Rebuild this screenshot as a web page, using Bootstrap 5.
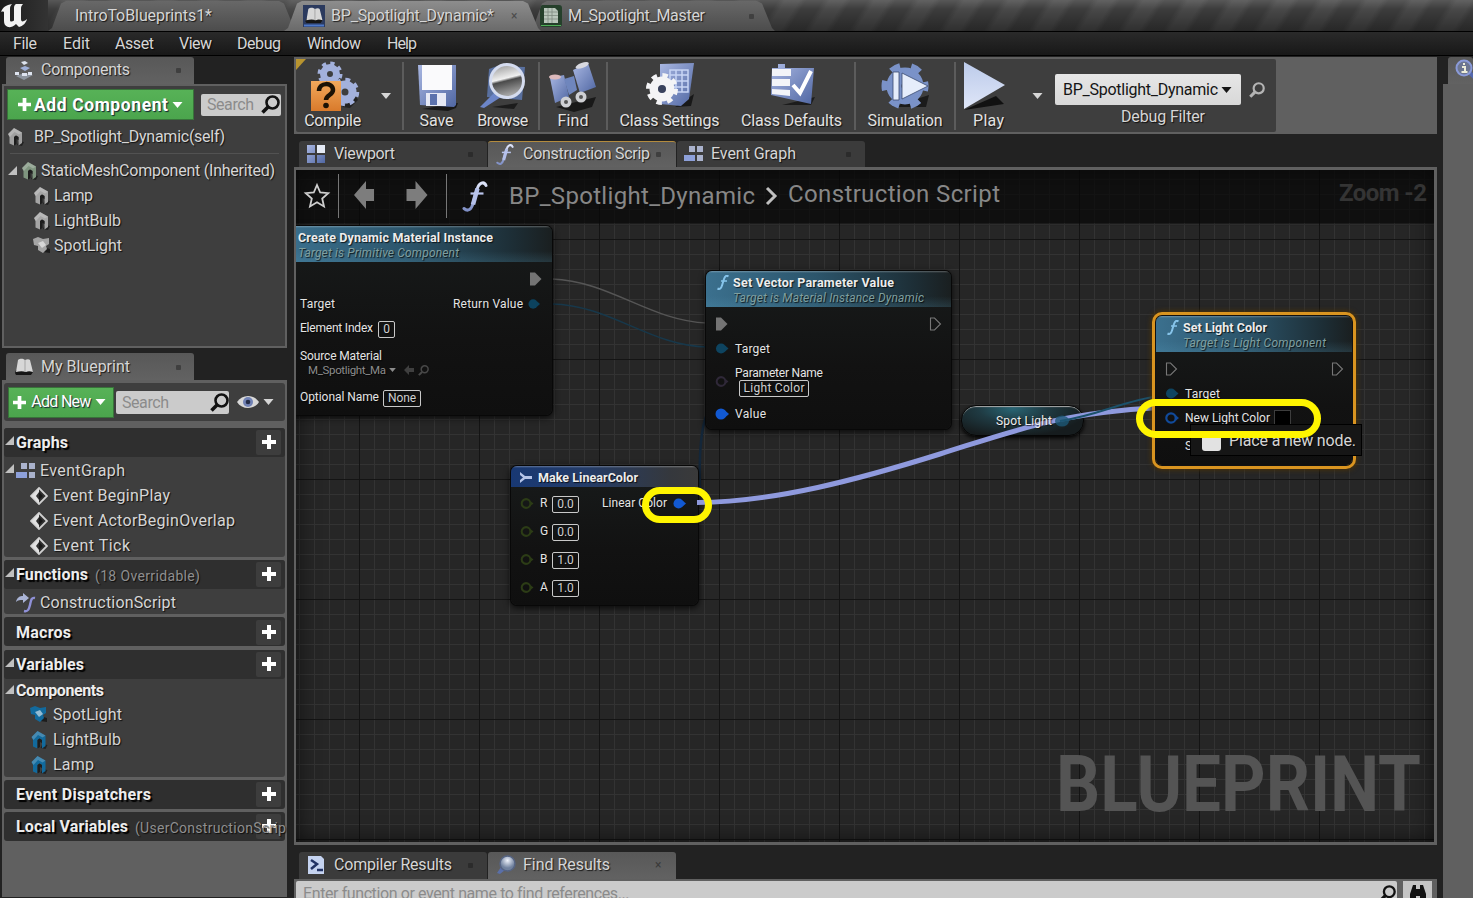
<!DOCTYPE html>
<html lang="en">
<head>
<meta charset="utf-8">
<title>Blueprint Editor</title>
<link href="https://cdn.jsdelivr.net/npm/bootstrap@5.3.0/dist/css/bootstrap.min.css" rel="stylesheet">
<style>
body{width:1473px;height:898px;overflow:hidden;background:#222;color:#d6d6d6;font:16px/20px Roboto,sans-serif;text-shadow:1px 1px 1px rgba(0,0,0,.75)}
span[data-w]{white-space:nowrap;flex:none;display:inline-block}
svg{flex:none;display:block;overflow:visible}
b,.fw-bold{color:#ededed}
/* title bar */
.titlebar{height:31px;background:linear-gradient(rgba(255,255,255,.14),transparent 30%,rgba(0,0,0,.35)),repeating-linear-gradient(122deg,#3c3c3c 0 14px,#484848 20px 32px,#3c3c3c 38px);box-shadow:0 1px #000;z-index:1}
.titlebar .logo-area{width:48px;background:linear-gradient(90deg,#1c1c1c,#333)}
.doc{height:30px;margin-top:1px;background:linear-gradient(#686868,#4c4c4c);clip-path:polygon(0 100%,4px 90%,13px 8%,18px 0,calc(100% - 18px) 0,calc(100% - 13px) 8%,calc(100% - 3px) 90%,100% 100%)}
.doc.on{background:linear-gradient(#8d8d8d,#6a6a6a);z-index:1}
.menubar{height:24px;margin-top:1px;background:linear-gradient(#2a2a2a,#181818);border-bottom:1px solid #000;padding-left:13px}
.menubar span{margin-right:26px}
/* docked panels */
.dtab{height:27px;width:188px;border-radius:3px 3px 0 0;background:#3b3b3b;margin-right:1px;padding-bottom:1px}
.dtab.on{background:linear-gradient(#585858,#626262)}
.dot{width:5px;height:5px;background:#2b2b2b;border-radius:1px}
.dtab.on .dot{background:#3f3f3f}
.frame{border:2px solid #606060;background:#3e3e3e}
.left{width:287px;padding-left:2px}
.green{background:linear-gradient(#57b257,#4ba54d);color:#fff;box-shadow:0 0 0 1px #38733a;text-shadow:1px 1px 1px #123}
.field{background:#cbcbcb;color:#8b8b8b;text-shadow:none;border-radius:2px}
.sec{background:#3e3e3e;border-radius:3px;margin:0 2px 3px 2px}
.head{height:29px;background:#2f2f2f;border-radius:3px}
.head b{text-shadow:2px 2px 1px #000;font-weight:700}
.plusbtn{width:25px;height:25px;background:#3d3d3d;border-radius:2px;margin-right:4px}
.plusbtn svg{margin-bottom:1px}
.rw{height:25px}
.lower .rw{padding-top:2px}
.small14{font-size:14px;color:#8f8f8f}
/* toolbar */
.tools{height:77px;width:1143px;background:#606060;padding:2px}
.tools .grp{background:#3e3e3e;width:980px;border-radius:2px}
.part{border-right:2px solid #5c5c5c;height:68px;margin-top:3px}
.tool{text-align:center;color:#e2e2e2}
.tool svg{height:50px;width:50px;margin:-1px auto 0}
.tool span{line-height:19px}
.combo{width:186px;height:31px;background:linear-gradient(#e6e6e6,#d8d8d8);color:#151515;text-shadow:none;border-radius:2px;padding-left:8px}
/* graph */
.graph{height:678px;width:1143px;border:3px solid #606060;border-left-width:2px;background-color:#262626;
background-image:linear-gradient(#141414 1px,transparent 1px),linear-gradient(90deg,#141414 1px,transparent 1px),linear-gradient(#333 1px,transparent 1px),linear-gradient(90deg,#333 1px,transparent 1px);
background-size:120px 120px,120px 120px,15px 15px,15px 15px;background-position:0 69px,63px 0,0 9px,3px 0}
.crumbs{height:53px;background:rgba(7,7,7,.72);color:#878787;font-size:24px;text-shadow:none;box-shadow:0 1px 2px #0006}
.crumbs i{width:1px;height:44px;background:#777}
.vignette{inset:0;box-shadow:inset 0 0 22px #000a}
.node{position:absolute;background:linear-gradient(#181b1b,#121212 60%,#0f0f0f);border-radius:6px;box-shadow:0 0 0 1px #080808,0 2px 6px 1px #000b;font-size:12px;line-height:14px;color:#e4e4e4;overflow:hidden}
.nh{height:36px;padding-top:4px;margin-bottom:4px;background:linear-gradient(rgba(255,255,255,.28) 0,transparent 2px,transparent 70%,rgba(90,160,190,.18)),linear-gradient(90deg,#3b708e,#2c556b 45%,#1d2e36 85%,#1a1f20)}
.nh b{font-size:12.5px;line-height:15px;height:15px;display:block;font-weight:700}
.nh em{line-height:16px;height:15px;display:block;color:#7f9f9f}
.pr{height:25px;padding-left:9px}
.pr>svg:first-child{margin-right:6px}
.bx{border:1.5px solid #c9c9c9;border-radius:2px;height:17px;line-height:15px;text-align:center;color:#cfcfcf}
.pill{position:absolute;border-radius:15px;border:1px solid #060606;box-shadow:inset 0 2px 1px -1px #aaa,0 2px 4px #000;background:radial-gradient(ellipse at 42% 10%,#286473 0,#1f3a42 35%,#161c1e 75%);font-size:12px}
.ring{position:absolute;border:7px solid #fff500;border-radius:20px;z-index:5}
.tip{position:absolute;background:#161616;border:1px solid #000;z-index:4}
.layer{position:absolute;left:0;top:0;z-index:1}
</style>
</head>
<body>
<svg width="0" height="0" class="position-absolute">
<defs>
<linearGradient id="lv" x2="0" y2="1"><stop stop-color="#dfe5fa"/><stop offset="1" stop-color="#7f8fc6"/></linearGradient>
<linearGradient id="pl" x2="0" y2="1"><stop stop-color="#bccbea"/><stop offset="1" stop-color="#dfe6f8"/></linearGradient>
<linearGradient id="bl" x2="1" y2="1"><stop stop-color="#a9b7e2"/><stop offset="1" stop-color="#5067a3"/></linearGradient>
<linearGradient id="or" x2="0" y2="1"><stop stop-color="#f1a95c"/><stop offset="1" stop-color="#d97a2b"/></linearGradient>
<linearGradient id="gl" x2=".25" y2="1"><stop stop-color="#8e8e8e"/><stop offset=".5" stop-color="#f0f0f0"/><stop offset=".58" stop-color="#4a4a4a"/><stop offset="1" stop-color="#a5a5a5"/></linearGradient>
<radialGradient id="ball" cx=".5" cy=".3"><stop stop-color="#eef2fb"/><stop offset="1" stop-color="#71829f"/></radialGradient>
<symbol id="mesh" viewBox="0 0 16 18"><path d="M11 13l5 1-2 4-5-1z" fill="#161616" opacity=".7"/><path d="M0 6L6 0l8 4.500V15l-3.500 2.500V9L8 7.500 6 9v8.500L1.500 15.500V9z" fill="currentColor"/><path d="M0 6L6 0l8 4.500-3 2L6.500 4 2 9z" fill="#fff" opacity=".22"/><path d="M6 9l2-1.500L10.500 9v3L8.500 11v5L6 17.500z" fill="#1d1d1d"/></symbol>
<symbol id="spot" viewBox="0 0 18 18"><path d="M10 10l7 2v4l-7-1z" fill="#1c1c1c"/><path d="M0 2l5-2 5 2 6-1v6l-3 2 1 3-4 4-5-3v-4L1 8z" fill="currentColor"/><path d="M5 6l5-2 3 4-4 3z" fill="#fff" opacity=".55"/></symbol>
<symbol id="dia" viewBox="0 0 18 18"><path d="M9 1l8 8-8 8-8-8z" fill="#303030" stroke="#d0d0d0" stroke-width="1.800"/><path d="M9 1.500L1.500 9 9 16.500V13L6 9l3-4z" fill="#e2e2e2"/><path d="M9 5v8l4-4z" fill="#181818"/></symbol>
<symbol id="plus" viewBox="0 0 14 14"><path d="M5 0h4v5h5v4H9v5H5V9H0V5h5z" fill="currentColor"/></symbol>
<symbol id="car" viewBox="0 0 10 6"><path d="M0 0h10L5 6z" fill="currentColor"/></symbol>
<symbol id="tri" viewBox="0 0 9 9"><path d="M9 0v9H0z" fill="#c0c0c0"/></symbol>
<symbol id="mag" viewBox="0 0 19 19"><circle cx="11.500" cy="7.500" r="6" fill="none" stroke="currentColor" stroke-width="2.600"/><path d="M7 12l-5.500 5.500" stroke="currentColor" stroke-width="3.600"/></symbol>
<symbol id="eff" viewBox="0 0 26 30"><path d="M24 4C22-.5 17 1 15 8L11 22C9.500 28 6 30.500 2 27" fill="none" stroke="url(#lv)" stroke-width="3" stroke-linecap="round"/><path d="M15.500 7L11 23" stroke="#b4c0ea" stroke-width="4.500"/><path d="M8.500 12h13" stroke="#b9c4ec" stroke-width="2.200"/></symbol>
<symbol id="effs" viewBox="0 0 12 15"><path d="M11.500 1.500C9.500 0 8 1 7 4L5 10.500C4 14 2.500 14.500.5 13.500" fill="none" stroke="#86c4ea" stroke-width="2"/><path d="M4 6h6" stroke="#86c4ea" stroke-width="1.400"/></symbol>
<symbol id="grid4" viewBox="0 0 20 18"><path d="M5 1h6v6H5zM13 1h6v6h-6zM13 10h6v6h-6z" fill="#aab2cc"/><path d="M0 10h11v6H0z" fill="#8da0da"/></symbol>
<symbol id="book" viewBox="0 0 20 18"><path d="M1 15l1 2h15l2-3-1-2H2z" fill="#161616"/><path d="M4 2c3-2 5-1 7 0 2-1 4-1 5 0l3 12c-3-1-5-1-7 0-3-1-6-1-10 0z" fill="#d7d7d7"/><path d="M11 2v12" stroke="#a5a5a5"/></symbol>
<symbol id="exF" viewBox="0 0 14 14"><path d="M1 .5h5L12.500 7 6 13.500H1z" fill="#747474"/></symbol>
<symbol id="exO" viewBox="0 0 14 14"><path d="M1.500 1h4L11.500 7l-6 6h-4z" fill="none" stroke="#777" stroke-width="1.100"/></symbol>
<symbol id="pF" viewBox="0 0 14 14"><circle cx="6" cy="7" r="5.500" fill="currentColor"/><path d="M10 3.500L14 7l-4 3.500z" fill="currentColor"/></symbol>
<symbol id="pO" viewBox="0 0 14 14"><circle cx="6" cy="7" r="4.700" fill="none" stroke="currentColor" stroke-width="2.200"/><path d="M11 4.500L14 7l-3 2.500z" fill="currentColor"/></symbol>
<symbol id="ball2" viewBox="0 0 20 20"><path d="M5 12l-4 6 3 1 5-4z" fill="#5a6fa8"/><circle cx="11.500" cy="8.500" r="7.500" fill="url(#ball)" stroke="#566483" stroke-width="1.500"/></symbol>
</defs></svg>

<header class="titlebar d-flex position-relative">
  <div class="logo-area"><svg width="30" height="28" viewBox="0 0 30 28"><path d="M1 12C3 7 6 5 12 4c-1.500 1.500-2 3-2 5v11c0 2 2 2 4 .5V8c0-2 .5-3 2-4h7c-1.500 1.500-2 3-2 5v10c0 2 1 3 3 2 1-.5 2-1 3-2-1 4-4 7-8 8l-3-3c-3 3-6 3.500-8 3-3-1-4-3-4-6v-9c-2-1-3 0-5 1z" fill="#f3f3f3"/></svg></div>
  <div class="doc d-flex align-items-center" style="width:249px;padding-left:27px"><span data-w="137">IntroToBlueprints1*</span></div>
  <div class="doc on d-flex align-items-center" style="width:257px;margin-left:-13px;padding-left:19px"><svg width="22" height="22" style="margin-right:6px"><path d="M0 0h22v22H0z" fill="#2b3a5e"/><use href="#book" x="1" y="2" width="20" height="17"/><path d="M1 20.500h20" stroke="#4d78c9" stroke-width="2"/></svg><span data-w="163">BP_Spotlight_Dynamic*</span><span style="margin-left:17px;color:#4b4b4b;font-size:12px;text-shadow:none">×</span></div>
  <div class="doc d-flex align-items-center" style="width:246px;margin-left:-12px;padding-left:11px"><svg width="22" height="22" style="margin-right:6px"><rect width="22" height="22" rx="3" fill="#25402b"/><path d="M4 3h11l3 3v12H4z" fill="#b9c6bb"/><path d="M4 7h14M4 10.500h14M4 14h14M8 3v15M12 3v15" stroke="#7d8c80" stroke-width=".8"/><path d="M1 20.500h20" stroke="#4fae57"/></svg><span data-w="137">M_Spotlight_Master</span><span class="dot" style="margin-left:44px;background:#404040"></span></div>
</header>
<nav class="menubar d-flex align-items-center"><span data-w="24">File</span><span data-w="27" style="margin-right:25px">Edit</span><span data-w="39" style="margin-right:25px">Asset</span><span data-w="33" style="margin-right:25px">View</span><span data-w="44">Debug</span><span data-w="54">Window</span><span data-w="30">Help</span></nav>

<main class="d-flex" style="padding-top:1px;height:841px">
 <aside class="left d-flex flex-column">
  <div class="dtab on d-flex align-items-center" style="margin-left:4px;padding-left:8px"><svg width="20" height="20" viewBox="0 0 20 20" style="margin-right:7px"><path d="M2 16l8-3 9 2-9 5z" fill="#8d949e"/><path d="M6 8l5-2 5 2-5 3z" fill="#9fb0d8"/><path d="M7 2l4-1 3 2-4 2zM1 12h4v3H1zM14 12h4v3h-4zM8 13h5v3H8z" fill="#dde3ee"/></svg><span data-w="89">Components</span><span class="dot" style="margin-left:46px"></span></div>
  <section class="frame" style="height:264px;padding:4px 4px 0">
    <div class="d-flex align-items-center"><button class="green border-0 p-0 d-flex align-items-center fw-bold" style="width:185px;height:29px;font-size:17.500px;padding-left:10px!important"><svg width="13" height="13" style="margin-right:3px"><use href="#plus"/></svg><span data-w="134">Add Component</span><svg width="11" height="6" style="margin-left:4px"><use href="#car"/></svg></button>
    <div class="field d-flex align-items-center" style="width:80px;height:22px;margin-left:8px;padding-left:6px"><span data-w="47">Search</span><svg width="19" height="19" style="margin-left:7px;color:#111"><use href="#mag"/></svg></div></div>
    <div class="d-flex align-items-center" style="height:32px;padding-top:4px"><svg width="16" height="18" style="margin-right:10px;color:#a0a0a0"><use href="#mesh"/></svg><span data-w="191">BP_Spotlight_Dynamic(self)</span></div>
    <div style="height:1px;background:#525252;margin:2px 2px 4px"></div>
    <div class="rw d-flex align-items-center"><svg width="9" height="9"><use href="#tri"/></svg><svg width="16" height="18" style="margin:0 3px 0 5px;color:#7f957f"><use href="#mesh"/></svg><span data-w="234">StaticMeshComponent (Inherited)</span></div>
    <div class="rw d-flex align-items-center" style="padding-left:26px"><svg width="16" height="18" style="margin-right:4px;color:#a5a5a5"><use href="#mesh"/></svg><span data-w="39">Lamp</span></div>
    <div class="rw d-flex align-items-center" style="padding-left:26px"><svg width="16" height="18" style="margin-right:4px;color:#a5a5a5"><use href="#mesh"/></svg><span data-w="67">LightBulb</span></div>
    <div class="rw d-flex align-items-center" style="padding-left:25px"><svg width="18" height="18" style="margin-right:3px;color:#a5a5a5"><use href="#spot"/></svg><span data-w="68">SpotLight</span></div>
  </section>
  <div class="dtab on d-flex align-items-center" style="margin:5px 0 0 4px;padding:1px 0 0 8px"><svg width="20" height="18" style="margin-right:7px"><use href="#book"/></svg><span data-w="89">My Blueprint</span><span class="dot" style="margin-left:46px"></span></div>
  <section class="lower flex-fill" style="background:#606060;padding-top:3px">
    <div class="sec d-flex align-items-center" style="height:38px;margin-bottom:7px;padding-left:5px"><button class="green border-0 p-0 d-flex align-items-center" style="width:104px;height:29px;padding-left:4px!important"><svg width="13" height="13" style="margin-right:5px"><use href="#plus"/></svg><span data-w="60">Add New</span><svg width="11" height="6" style="margin-left:4px"><use href="#car"/></svg></button>
    <div class="field d-flex align-items-center" style="width:113px;height:23px;margin-left:3px;padding:1px 0 0 6px"><span data-w="47">Search</span><svg width="19" height="19" style="margin-left:41px;color:#111"><use href="#mag"/></svg></div>
    <svg width="22" height="14" viewBox="0 0 22 14" style="margin-left:8px"><path d="M0 7c5-8 17-8 22 0-5 8-17 8-22 0z" fill="#d8d8d8"/><circle cx="11" cy="7" r="5" fill="#7182b5"/><circle cx="11" cy="7" r="2.300" fill="#242c48"/></svg><svg width="11" height="6" style="margin-left:4px"><use href="#car"/></svg></div>
    <div class="sec" style="height:129px"><div class="head d-flex align-items-center"><svg width="9" height="9" style="margin:0 2px 4px 1px"><use href="#tri"/></svg><b><span data-w="52">Graphs</span></b><div class="plusbtn ms-auto d-flex align-items-center justify-content-center"><svg width="14" height="14" color="#fff"><use href="#plus"/></svg></div></div>
      <div class="rw d-flex align-items-center"><svg width="9" height="9" style="margin:0 2px 4px 1px"><use href="#tri"/></svg><svg width="20" height="18" style="margin-right:4px"><use href="#grid4"/></svg><span data-w="85">EventGraph</span></div>
      <div class="rw d-flex align-items-center" style="padding-left:26px"><svg width="18" height="18" style="margin-right:5px"><use href="#dia"/></svg><span data-w="117">Event BeginPlay</span></div>
      <div class="rw d-flex align-items-center" style="padding-left:26px"><svg width="18" height="18" style="margin-right:5px"><use href="#dia"/></svg><span data-w="182">Event ActorBeginOverlap</span></div>
      <div class="rw d-flex align-items-center" style="padding-left:26px"><svg width="18" height="18" style="margin-right:5px"><use href="#dia"/></svg><span data-w="77">Event Tick</span></div></div>
    <div class="sec" style="height:54px"><div class="head d-flex align-items-center"><svg width="9" height="9" style="margin:0 2px 4px 1px"><use href="#tri"/></svg><b><span data-w="72">Functions</span></b><span class="small14" data-w="105" style="margin-left:7px;padding-top:3px">(18 Overridable)</span><div class="plusbtn ms-auto d-flex align-items-center justify-content-center"><svg width="14" height="14" color="#fff"><use href="#plus"/></svg></div></div>
      <div class="rw d-flex align-items-center" style="padding-left:12px"><svg width="20" height="20" viewBox="0 0 20 20" style="margin-right:4px"><path d="M0 9c1-5 4-6 7-6V0l6 5-6 5V7C4 7 2 7 0 9z" fill="#aab4d6"/><path d="M19 5c-4-1-4 3-5 7s-2 7-6 6" fill="none" stroke="#8f90d6" stroke-width="2.400"/></svg><span data-w="136">ConstructionScript</span></div></div>
    <div class="sec head d-flex align-items-center" style="background:#2f2f2f;margin-bottom:4px;padding:2px 0 0 12px"><b><span data-w="55">Macros</span></b><div class="plusbtn ms-auto d-flex align-items-center justify-content-center"><svg width="14" height="14" color="#fff"><use href="#plus"/></svg></div></div>
    <div class="sec" style="height:127px"><div class="head d-flex align-items-center"><svg width="9" height="9" style="margin:0 2px 4px 1px"><use href="#tri"/></svg><b><span data-w="68">Variables</span></b><div class="plusbtn ms-auto d-flex align-items-center justify-content-center"><svg width="14" height="14" color="#fff"><use href="#plus"/></svg></div></div>
      <div class="d-flex align-items-center" style="height:22px;padding-top:2px"><svg width="9" height="9" style="margin:0 2px 4px 1px"><use href="#tri"/></svg><b><span data-w="88">Components</span></b></div>
      <div class="rw d-flex align-items-center" style="padding-left:26px"><svg width="18" height="18" style="margin-right:5px;color:#126a9d"><use href="#spot"/></svg><span data-w="69">SpotLight</span></div>
      <div class="rw d-flex align-items-center" style="padding-left:27px"><svg width="17" height="18" style="margin-right:5px;color:#126a9d"><use href="#mesh"/></svg><span data-w="68">LightBulb</span></div>
      <div class="rw d-flex align-items-center" style="padding-left:27px"><svg width="17" height="18" style="margin-right:5px;color:#126a9d"><use href="#mesh"/></svg><span data-w="41">Lamp</span></div></div>
    <div class="sec head d-flex align-items-center" style="background:#2f2f2f;padding-left:12px"><b><span data-w="135">Event Dispatchers</span></b><div class="plusbtn ms-auto d-flex align-items-center justify-content-center"><svg width="14" height="14" color="#fff"><use href="#plus"/></svg></div></div>
    <div class="sec head d-flex align-items-center position-relative" style="background:#2f2f2f;padding-left:12px"><b><span data-w="112">Local Variables</span></b><div class="plusbtn position-absolute end-0 d-flex align-items-center justify-content-center"><svg width="14" height="14" color="#fff"><use href="#plus"/></svg></div><span class="small14 position-relative" data-w="151" style="margin-left:7px;padding-top:3px">(UserConstructionScrip</span></div>
  </section>
 </aside>

 <div style="width:1143px;margin-left:7px">
  <div class="tools"><div class="grp d-flex position-relative h-100">
    <svg width="10" height="11" class="position-absolute"><path d="M0 0h10L0 11z" fill="#b8942f"/></svg>
    <div class="part d-flex" style="width:108px"><div class="tool" style="width:73px"><svg viewBox="0 0 50 50"><path d="M34 46l14-10 2 3-8 8z" fill="#222"/><g fill="none" stroke="#a3b1dc"><circle cx="22" cy="13" r="6.500" stroke-width="7"/><circle cx="22" cy="13" r="10.500" stroke-width="4" stroke-dasharray="4.120 4.120"/><circle cx="37" cy="31" r="7.500" stroke-width="8"/><circle cx="37" cy="31" r="12" stroke-width="4.500" stroke-dasharray="4.710 4.710"/></g><path d="M3 20h30v30H3z" fill="url(#or)"/><path d="M11 30c0-9 14-9 14-1 0 5-7 5-7 10" fill="none" stroke="#1b1205" stroke-width="4.500"/><circle cx="18" cy="44.500" r="2.800" fill="#1b1205"/></svg><span data-w="57">Compile</span></div><svg width="12" height="6" style="margin:31px 0 0 11px"><use href="#car"/></svg></div>
    <div class="part d-flex" style="width:136px"><div class="tool" style="width:65px"><svg viewBox="0 0 50 50"><path d="M10 48l36-6-2 5-8 3z" fill="#181818"/><path d="M6 4h38v40l-2 2-34-2z" fill="url(#bl)"/><path d="M10 4h30v25H10z" fill="#fafafc"/><path d="M14 32h20v13H14z" fill="#e6e9f5"/><path d="M18 33h7v11h-7z" fill="#5c72ad"/></svg><span data-w="34">Save</span></div><div class="tool" style="width:67px"><svg viewBox="0 0 50 50"><path d="M11 8l8-3 28 1-3 33-35-3z" fill="#59709f"/><path d="M14 46l26-4-4 6z" fill="#1c1c1c"/><path d="M17 31L2 46l4 1 17-11z" fill="#6c85c8"/><circle cx="29" cy="20" r="16.500" fill="url(#gl)" stroke="#d5dcef" stroke-width="3"/></svg><span data-w="51">Browse</span></div></div>
    <div class="part" style="width:68px"><div class="tool"><svg viewBox="0 0 50 50"><path d="M8 46l40-10-4 10-18 5z" fill="#191919"/><path d="M2 17l14-3 5 22-14 6z" fill="url(#bl)"/><path d="M25 9l15-7 8 24-16 6z" fill="url(#bl)"/><path d="M16 18l10-3 3 14-8 5z" fill="#6f86bd"/><ellipse cx="7" cy="16" rx="6" ry="2.500" fill="#dcb9bb"/><ellipse cx="34" cy="4.500" rx="7" ry="2.500" transform="rotate(-20 34 4)" fill="#d8d9e0"/><circle cx="18" cy="41" r="5.500" fill="#cfd0d4"/><circle cx="33" cy="36" r="5.500" fill="#cfd0d4"/><circle cx="18" cy="41" r="2" fill="#555"/><circle cx="33" cy="36" r="2" fill="#555"/></svg><span data-w="31">Find</span></div></div>
    <div class="part d-flex" style="width:248px"><div class="tool" style="width:123px"><svg viewBox="0 0 50 50"><path d="M30 46l19-13-3 12z" fill="#181818"/><path d="M15 3l34-1-5 36-8 7-21-2z" fill="url(#bl)"/><path d="M25 9h18v22H25zM31 9v22M37 9v22M25 14h18M25 20h18M25 26h18" fill="none" stroke="#c8d5f5" stroke-width="1.500"/><g fill="none" stroke="#f4f4f6"><circle cx="17" cy="28" r="8" stroke-width="9"/><circle cx="17" cy="28" r="13.500" stroke-width="5" stroke-dasharray="5.300 5.300"/></g><circle cx="17" cy="28" r="4" fill="#39425c"/></svg><span data-w="100">Class Settings</span></div><div class="tool" style="width:121px"><svg viewBox="0 0 50 50"><path d="M15 44l33-8-4 8z" fill="#1c1c1c"/><path d="M11 3h7v4h29l-3 36-40-9 1-27h6z" fill="url(#bl)"/><path d="M5 8h19v7H5zM5 18h18v7H5zM5 28l18 1v6L5 33z" fill="#f3f4f8"/><path d="M26 24l7 8L44 10" fill="none" stroke="#fff" stroke-width="4"/></svg><span data-w="101">Class Defaults</span></div></div>
    <div class="part" style="width:100px"><div class="tool"><svg viewBox="0 0 50 50"><path d="M12 46l37-12-3 12z" fill="#1b1b1b"/><g fill="none" stroke="#7a92c8"><circle cx="25" cy="25" r="11" stroke-width="15"/><circle cx="25" cy="25" r="20.500" stroke-width="6" stroke-dasharray="10 11.470" stroke-dashoffset="5"/></g><path d="M13 11h6v28h-6zM22 12l26 13-26 13z" fill="#e6edfb" stroke="#3a4a70" stroke-width=".8"/></svg><span data-w="75">Simulation</span></div></div>
    <div class="d-flex" style="margin-top:3px"><div class="tool" style="width:65px"><svg viewBox="0 0 50 50" style="margin-left:4px"><path d="M4 49l40-6-8-8z" fill="#111"/><path d="M4 1l41 23L4 48z" fill="url(#pl)"/></svg><span data-w="31">Play</span></div><svg width="11" height="6" style="margin:31px 0 0 11px"><use href="#car"/></svg>
    <div style="margin:12px 0 0 12px"><div class="d-flex align-items-center"><div class="combo d-flex align-items-center"><span data-w="155">BP_Spotlight_Dynamic</span><svg width="11" height="6" style="margin-left:3px"><use href="#car"/></svg></div><svg width="16" height="16" style="margin-left:8px;color:#b4b4b4"><use href="#mag"/></svg></div><div style="padding-left:66px;margin-top:2px"><span data-w="84">Debug Filter</span></div></div></div>
  </div></div>
  <div class="d-flex" style="padding:7px 0 0 5px;height:33px">
    <div class="dtab d-flex align-items-center" style="padding-left:7px"><svg width="20" height="20" viewBox="0 0 20 20" style="margin-right:8px"><path d="M1 1h8v8H1zM11 1h8v8h-8zM1 11h8v8H1zM11 11h8v8h-8z" fill="url(#bl)"/><path d="M11 1h8v8h-8z" fill="#e4eaf5"/></svg><span data-w="61">Viewport</span><span class="dot" style="margin-left:73px"></span></div>
    <div class="dtab on d-flex align-items-center" style="padding:0 0 2px 8px;border-top:1px solid #b38b3e"><svg width="18" height="21" style="margin-right:9px"><use href="#eff"/></svg><span data-w="127">Construction Scrip</span><span class="dot" style="margin-left:6px"></span></div>
    <div class="dtab d-flex align-items-center" style="padding-left:7px"><svg width="20" height="18" style="margin-right:7px"><use href="#grid4"/></svg><span data-w="85">Event Graph</span><span class="dot" style="margin-left:50px"></span></div>
  </div>
  <div class="graph position-relative overflow-hidden">
    <div class="vignette position-absolute"></div>
    <svg class="layer" width="1138" height="673" viewBox="296 170 1138 673" style="z-index:0"><text x="1056" y="811" font-size="78" font-weight="700" fill="#545454" textLength="365" lengthAdjust="spacingAndGlyphs" style="text-shadow:none">BLUEPRINT</text><g fill="none" stroke-width="1.500"><path d="M552 279C610 281 650 321 707 323" stroke="#555"/><path d="M552 304C610 305 650 346 707 347" stroke="#17384b"/><path d="M700 492C699 460 700 430 707 414" stroke="#14273a" stroke-width="2.500"/></g></svg>
    <div class="crumbs d-flex align-items-center position-relative" style="padding-bottom:1px"><svg width="26" height="26" viewBox="0 0 26 26" style="margin:0 8px"><path d="M13 2l3.200 7.500 8 .7-6 5.300 1.800 8L13 19.300 6 23.500l1.800-8-6-5.300 8-.7z" fill="none" stroke="#cfcfcf" stroke-width="1.800"/></svg><i></i>
      <svg width="21" height="28" viewBox="0 0 21 28" style="margin:0 0 2px 15px"><path d="M0 14L12 0v8h8v12h-8v8z" fill="#7d7d7d"/></svg><svg width="22" height="28" viewBox="0 0 21 28" style="margin:0 18px 2px 31px"><path d="M21 14L9 0v8H0v12h9v8z" fill="#7d7d7d"/></svg><i></i>
      <svg width="26" height="31" style="margin:0 21px 0 15px"><use href="#eff"/></svg><span data-w="246" style="padding-bottom:1px">BP_Spotlight_Dynamic</span><svg width="13" height="18" viewBox="0 0 13 18" style="margin:0 10px 0 10px"><path d="M2 1l8 8-8 8" fill="none" stroke="#c0c0c0" stroke-width="3"/></svg><span data-w="212" style="padding-bottom:4px">Construction Script</span><b class="ms-auto" style="margin-right:7px;color:#343434;padding-bottom:7px"><span data-w="88">Zoom -2</span></b></div>

    <div class="node" style="left:-8px;top:56px;width:264px;height:189px"><div class="nh" style="padding-left:10px"><b><span data-w="195">Create Dynamic Material Instance</span></b><em><span data-w="161">Target is Primitive Component</span></em></div>
      <div class="pr d-flex align-items-center justify-content-end"><svg width="14" height="14" style="margin-right:9px"><use href="#exF"/></svg></div>
      <div class="pr d-flex align-items-center" style="padding:0 11px 0 12px"><span data-w="35">Target</span><span class="ms-auto" data-w="70">Return Value</span><svg width="14" height="12" style="margin-left:4px;color:#0c425e"><use href="#pF"/></svg></div>
      <div class="pr d-flex align-items-center" style="padding:0 0 1px 12px"><span data-w="73" style="margin-right:5px">Element Index</span><div class="bx" style="width:17px;margin-top:2px">0</div></div>
      <div style="padding:8px 0 0 12px"><span data-w="82">Source Material</span></div>
      <div class="d-flex align-items-center" style="padding-left:20px;color:#8c8c8c"><span data-w="78" style="font-size:11.500px">M_Spotlight_Ma</span><svg width="7" height="4" style="margin-left:3px"><use href="#car"/></svg><svg width="10" height="10" viewBox="0 0 10 10" style="margin:0 4px 0 8px"><path d="M0 5l5-5v3h5v4H5v3z" fill="#3f3f3f"/></svg><svg width="11" height="11" style="color:#484848"><use href="#mag"/></svg></div>
      <div class="d-flex align-items-center" style="padding:11px 0 0 12px"><span data-w="79" style="margin:0 4px 1px 0">Optional Name</span><div class="bx" style="width:38px;margin-top:2px"><span data-w="28">None</span></div></div>
    </div>

    <div class="node" style="left:410px;top:101px;width:245px;height:158px"><div class="nh d-flex" style="padding-left:11px"><svg width="12" height="15" style="margin-right:4px"><use href="#effs"/></svg><div><b><span data-w="161">Set Vector Parameter Value</span></b><em><span data-w="191">Target is Material Instance Dynamic</span></em></div></div>
      <div class="pr d-flex align-items-center justify-content-between" style="padding-right:8px"><svg width="14" height="14"><use href="#exF"/></svg><svg width="14" height="14"><use href="#exO"/></svg></div>
      <div class="pr d-flex align-items-center"><svg width="14" height="13" color="#0e4460"><use href="#pF"/></svg><span data-w="35">Target</span></div>
      <div class="d-flex align-items-center" style="padding:5px 0 0 9px"><svg width="14" height="13" style="margin-right:6px;color:#2f2838"><use href="#pO"/></svg><div><span data-w="88" style="display:block">Parameter Name</span><div class="bx" style="width:70px;margin-left:4px"><span data-w="61">Light Color</span></div></div></div>
      <div class="pr d-flex align-items-center" style="margin-top:4px"><svg width="14" height="14" color="#1259d2"><use href="#pF"/></svg><span data-w="31">Value</span></div>
    </div>

    <div class="node" style="left:215px;top:296px;width:187px;height:139px"><div class="nh d-flex align-items-center" style="height:21px;padding:2px 0 0 9px;margin-bottom:2px;background:linear-gradient(rgba(255,255,255,.3),transparent 2px),linear-gradient(90deg,#183873,#243c68 40%,#35383d 85%,#3a3a3a)"><svg width="12" height="11" viewBox="0 0 12 11" style="margin-right:6px"><path d="M0 0l5 4h7v3H5l-5 4V8l3-2.500L0 3z" fill="#b4c3e8"/></svg><b><span data-w="100">Make LinearColor</span></b></div>
      <div class="pr d-flex align-items-center" style="height:28px"><svg width="14" height="13" color="#2c3c16"><use href="#pO"/></svg><span style="width:12px">R</span><div class="bx" style="width:27px;margin-top:2px">0.0</div><span data-w="65" style="margin-left:23px">Linear Color</span><svg width="15" height="13" style="margin-left:5px;color:#1259d2"><use href="#pF"/></svg></div>
      <div class="pr d-flex align-items-center" style="height:28px"><svg width="14" height="13" color="#2c3c16"><use href="#pO"/></svg><span style="width:12px">G</span><div class="bx" style="width:27px;margin-top:2px">0.0</div></div>
      <div class="pr d-flex align-items-center" style="height:28px"><svg width="14" height="13" color="#2c3c16"><use href="#pO"/></svg><span style="width:12px">B</span><div class="bx" style="width:27px;margin-top:2px">1.0</div></div>
      <div class="pr d-flex align-items-center" style="height:28px"><svg width="14" height="13" color="#2c3c16"><use href="#pO"/></svg><span style="width:12px">A</span><div class="bx" style="width:27px;margin-top:2px">1.0</div></div>
    </div>

    <div class="pill" style="left:665px;top:235px;width:123px;height:31px"></div>
    <svg class="layer" width="1138" height="673" viewBox="296 170 1138 673"><g fill="none"><path d="M697 502.500C775 502 860 479 940 454S1060 413 1160 407.500" stroke="#8f9ade" stroke-width="5"/><path d="M1060 421C1100 415 1125 400 1160 396" stroke="#1b516b" stroke-width="2"/></g><ellipse cx="1062" cy="421" rx="7" ry="5.500" fill="#1d5876" opacity=".8"/></svg>
    <div class="position-absolute" style="left:700px;top:244px;z-index:2;font-size:12px;line-height:14px;color:#eee"><span data-w="56">Spot Light</span></div>

    <div class="node" style="left:860px;top:146px;width:196px;height:149px;z-index:2;box-shadow:0 0 0 1px #111,0 0 0 4px #d99420,0 0 5px 5px #4a3208"><div class="nh d-flex" style="padding-left:11px"><svg width="12" height="15" style="margin-right:4px"><use href="#effs"/></svg><div><b><span data-w="84">Set Light Color</span></b><em><span data-w="143">Target is Light Component</span></em></div></div>
      <div class="pr d-flex align-items-center justify-content-between" style="padding-right:7px"><svg width="14" height="14"><use href="#exO"/></svg><svg width="14" height="14"><use href="#exO"/></svg></div>
      <div class="pr d-flex align-items-center"><svg width="14" height="13" color="#0e4460"><use href="#pF"/></svg><span data-w="35">Target</span></div>
      <div class="pr d-flex align-items-center" style="padding-bottom:1px"><svg width="14" height="14" color="#114a9a"><use href="#pO"/></svg><span data-w="85">New Light Color</span><div style="width:17px;height:16px;margin-left:4px;background:#000;border:1px solid #3d3d3d"></div></div>
      <div class="pr" style="padding:8px 0 0 29px">S</div>
    </div>
    <div class="tip d-flex align-items-center" style="left:894px;top:254px;width:172px;height:32px;padding:1px 0 0 11px"><svg width="19" height="20" style="margin-right:8px"><rect width="19" height="20" rx="3" fill="#e2e2e2"/></svg><span data-w="127">Place a new node.</span></div>
    <div class="ring" style="left:346px;top:317px;width:70px;height:36px"></div>
    <div class="ring" style="left:840px;top:229px;width:185px;height:39px"></div>
  </div>
  <div class="d-flex" style="padding:7px 0 0 5px;height:34px">
    <div class="dtab d-flex align-items-center" style="padding-left:8px"><svg width="18" height="20" viewBox="0 0 18 20" style="margin-right:9px"><path d="M1 1h13l3 3v15H1z" fill="#c5d3f0"/><path d="M4 5l6 4-6 5M10 15h6" fill="none" stroke="#223365" stroke-width="2.500"/></svg><span data-w="118">Compiler Results</span><span class="dot" style="margin-left:16px"></span></div>
    <div class="dtab on d-flex align-items-center" style="padding-left:8px"><svg width="20" height="20" style="margin-right:7px"><use href="#ball2"/></svg><span data-w="87">Find Results</span><span style="margin-left:45px;color:#3a3a3a;font-size:12px;text-shadow:none">×</span></div>
  </div>
  <div class="d-flex" style="background:#606060;height:22px;padding:2px 0 0 2px"><div class="field d-flex" style="width:1101px;height:22px;padding:3px 0 0 7px"><span data-w="326">Enter function or event name to find references...</span><svg width="17" height="17" style="margin:1px 1px 0 auto;color:#111"><use href="#mag"/></svg></div><div class="d-flex justify-content-center" style="width:29px;height:22px;background:#c4c4c4;margin-left:6px"><svg width="18" height="18" viewBox="0 0 18 18" style="margin-top:3px"><path d="M4 1h3v4h4V1h3l3 9v8h-6v-6H7v6H1v-8z" fill="#111"/></svg></div></div>
 </div>

 <aside style="margin-left:6px;width:30px"><div class="dtab on" style="width:25px;margin:0 0 0 5px;padding:2px 0 0 7px"><svg width="22" height="20" viewBox="0 0 22 20"><path d="M14 13l6 6" stroke="#5468ad" stroke-width="4"/><circle cx="9" cy="9" r="7.500" fill="#6d7690" stroke="#8a9ad8" stroke-width="2"/><path d="M9 4v2M7 8h3v5M6.500 13h6" stroke="#ececd8" stroke-width="2" fill="none"/></svg></div><div style="height:820px;background:#606060"></div></aside>
</main>
<script src="https://cdn.jsdelivr.net/npm/bootstrap@5.3.0/dist/js/bootstrap.bundle.min.js"></script>
<script>
document.querySelectorAll('span[data-w]').forEach(function(s){
  var n=s.textContent.length, w=+s.dataset.w, r=document.createRange();
  r.selectNodeContents(s);
  s.style.letterSpacing=((w-r.getBoundingClientRect().width)/(n-1)).toFixed(3)+'px';
  s.style.width=w+'px';
});
</script>
</body>
</html>
